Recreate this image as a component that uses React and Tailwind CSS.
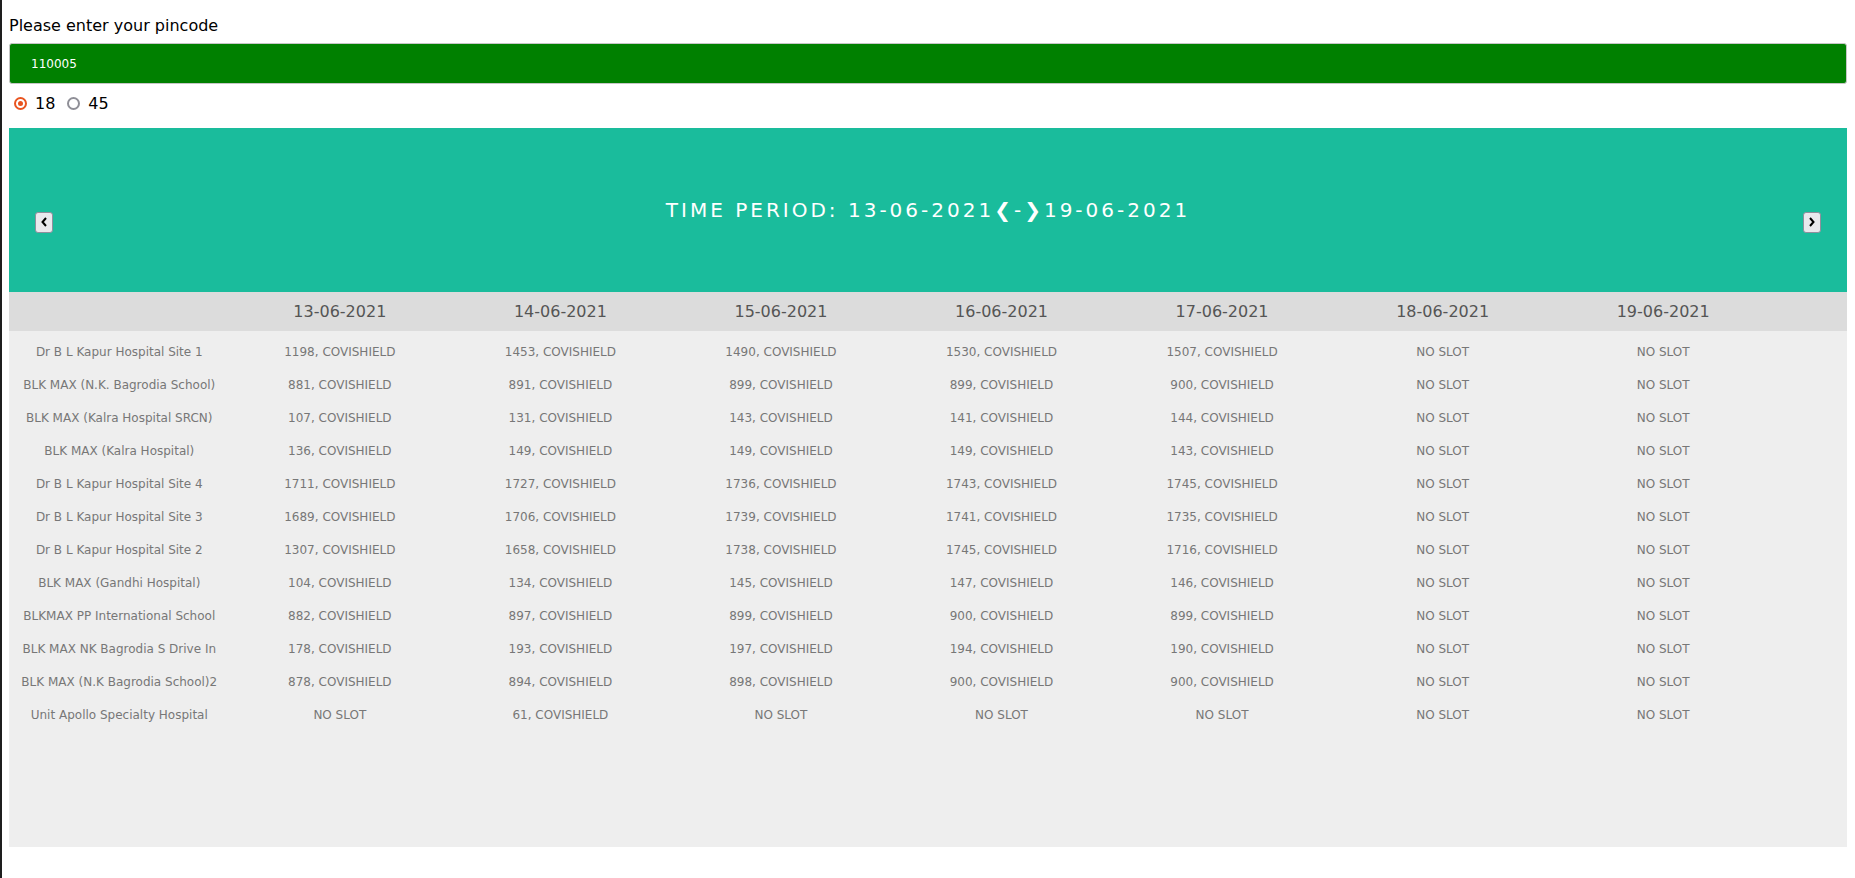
import React from 'react';

const dates = ['13-06-2021', '14-06-2021', '15-06-2021', '16-06-2021', '17-06-2021', '18-06-2021', '19-06-2021'];

// null means no slot for that day
const centers = [
  ['Dr B L Kapur Hospital Site 1', [1198, 1453, 1490, 1530, 1507, null, null]],
  ['BLK MAX (N.K. Bagrodia School)', [881, 891, 899, 899, 900, null, null]],
  ['BLK MAX (Kalra Hospital SRCN)', [107, 131, 143, 141, 144, null, null]],
  ['BLK MAX (Kalra Hospital)', [136, 149, 149, 149, 143, null, null]],
  ['Dr B L Kapur Hospital Site 4', [1711, 1727, 1736, 1743, 1745, null, null]],
  ['Dr B L Kapur Hospital Site 3', [1689, 1706, 1739, 1741, 1735, null, null]],
  ['Dr B L Kapur Hospital Site 2', [1307, 1658, 1738, 1745, 1716, null, null]],
  ['BLK MAX (Gandhi Hospital)', [104, 134, 145, 147, 146, null, null]],
  ['BLKMAX PP International School', [882, 897, 899, 900, 899, null, null]],
  ['BLK MAX NK Bagrodia S Drive In', [178, 193, 197, 194, 190, null, null]],
  ['BLK MAX (N.K Bagrodia School)2', [878, 894, 898, 900, 900, null, null]],
  ['Unit Apollo Specialty Hospital', [null, 61, null, null, null, null, null]],
];

const Chevron = ({ dir }) => (
  <svg width="6" height="10" viewBox="0 0 6 10">
    <polyline
      points={dir === 'left' ? '5,1 1.5,5 5,9' : '1,1 4.5,5 1,9'}
      fill="none"
      stroke="#000"
      strokeWidth="2"
    />
  </svg>
);

const NavButton = ({ dir }) => (
  <button className="w-[18px] h-[21px] translate-y-[12px] flex items-center justify-center bg-[#e9e9ed] border border-[#8f8f9d] rounded-[3px] shrink-0">
    <Chevron dir={dir} />
  </button>
);

const Radio = ({ checked }) => (
  <span
    className={`w-[13px] h-[13px] rounded-full border-2 flex items-center justify-center bg-white ${
      checked ? 'border-[#e9541f]' : 'border-[#8f8f97]'
    }`}
  >
    {checked && <span className="w-[5px] h-[5px] rounded-full bg-[#e9541f]" />}
  </span>
);

export default function App() {
  return (
    <div className="min-h-screen bg-white border-l-2 border-[#1e1e1e] pl-[7px] pr-[8px] pt-[16px] font-['DejaVu_Sans',sans-serif]">
      <div className="text-[16px] leading-[19px] text-black">Please enter your pincode</div>

      <input
        className="mt-[8px] block w-full h-[41px] bg-[#008000] border border-[#c6c6c6] rounded-[3px] px-[21px] text-white text-[12px] font-['DejaVu_Sans',sans-serif] outline-none"
        defaultValue="110005"
      />

      {/* age filter */}
      <div className="mt-[10px] h-[19px] flex items-center text-[16px] leading-[19px] text-black">
        <span className="ml-[5px]"><Radio checked /></span>
        <span className="ml-[8px]">18</span>
        <span className="ml-[12px]"><Radio /></span>
        <span className="ml-[8px]">45</span>
      </div>

      {/* week banner */}
      <div className="mt-[15px] h-[164px] bg-[#1abc9c] flex items-center px-[26px]">
        <NavButton dir="left" />
        <div className="flex-1 text-center text-white text-[20px] tracking-[3px] leading-[24px]">
          TIME PERIOD: 13-06-2021❮-❯19-06-2021
        </div>
        <NavButton dir="right" />
      </div>

      {/* header */}
      <div className="h-[39px] bg-[#dcdcdc]">
        <div className="grid grid-cols-8 w-[96%] h-full items-center text-[16px] text-[#555]">
          <div />
          {dates.map(d => (
            <div key={d} className="text-center">{d}</div>
          ))}
        </div>
      </div>

      {/* slots */}
      <div className="h-[516px] bg-[#eeeeee] pt-[4px]">
        {centers.map(([name, slots]) => (
          <div key={name} className="grid grid-cols-8 w-[96%] h-[33px] items-center text-[12px] text-[#777]">
            <div className="text-center whitespace-nowrap">{name}</div>
            {slots.map((n, i) => (
              <div key={i} className="text-center whitespace-nowrap">
                {n === null ? 'NO SLOT' : `${n}, COVISHIELD`}
              </div>
            ))}
          </div>
        ))}
      </div>
    </div>
  );
}
